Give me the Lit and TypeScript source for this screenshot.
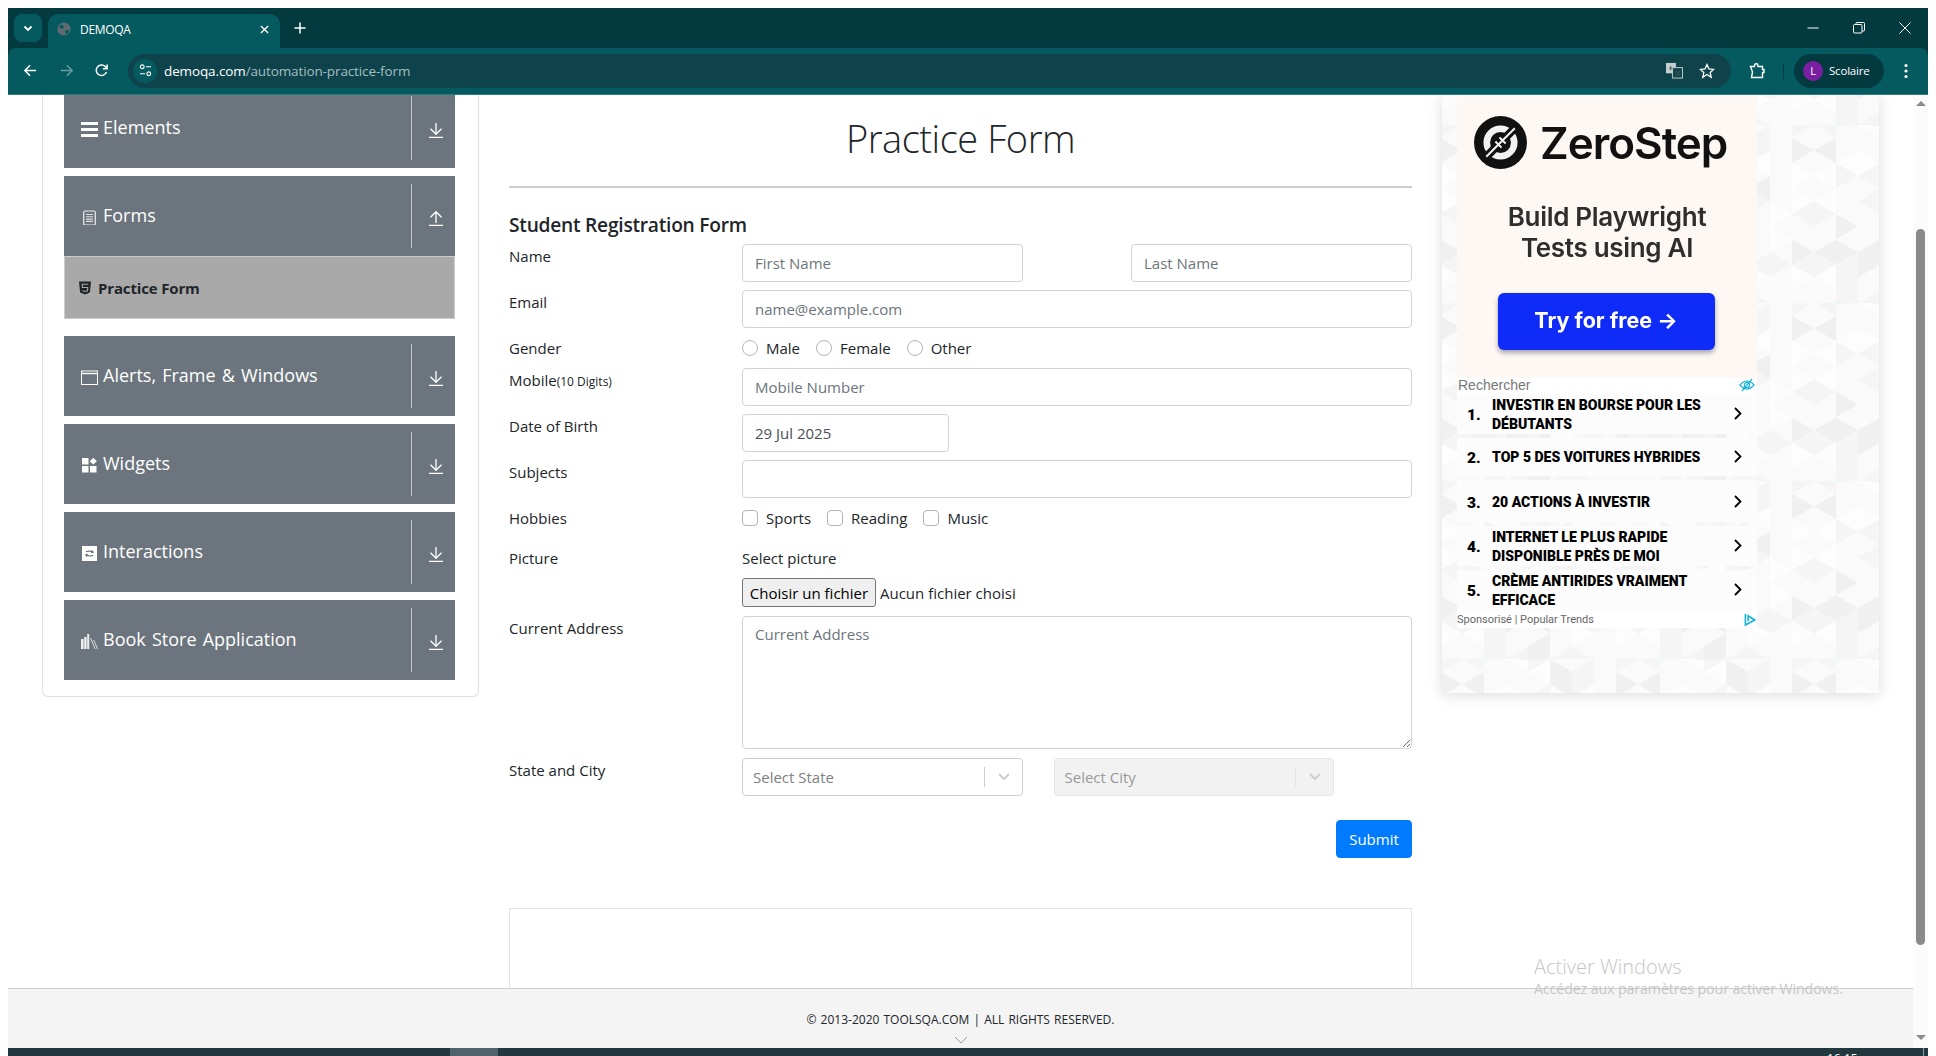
import { LitElement, html, css, svg } from "lit";
import { customElement } from "lit/decorators.js";

const arrowDown = html`<svg class="arrow" viewBox="0 0 16 16" fill="none" stroke="#fff" stroke-width="1.3"><path d="M8 1v11M2.5 6.8 8 12.3l5.5-5.5M1 15.3h14"/></svg>`;
const arrowUp = html`<svg class="arrow" viewBox="0 0 16 16" fill="none" stroke="#fff" stroke-width="1.3"><path d="M8 13V2M2.5 7.2 8 1.7l5.5 5.5M1 15.3h14"/></svg>`;

const icons = {
  elements: html`<svg class="gi" viewBox="0 0 17 15" fill="#fff"><path d="M0 0h17v3H0zM0 6h17v3H0zM0 12h17v3H0z"/></svg>`,
  forms: html`<svg class="gi" viewBox="0 0 17 15" fill="none" stroke="#fff"><rect x="2.7" y="1" width="11.6" height="14" rx="1.5" stroke="#eee" stroke-width="1.2"/><path d="M5 4.5h7M5 6.8h7M5 9.1h7M5 11.4h7" stroke="#ddd" stroke-width="1.1"/></svg>`,
  alerts: html`<svg class="gi" viewBox="0 0 17 15" fill="none"><rect x=".5" y="1" width="16" height="13.5" stroke="#fff" stroke-width="1"/><path d="M.5 3.5h16" stroke="#fff" stroke-width="1.4"/></svg>`,
  widgets: html`<svg class="gi" viewBox="0 0 17 15" fill="#fff"><path d="M1 0h6.5v6.5H1zM1 8h6.5v6.5H1zM9 8h6.5v6.5H9zM12.3-.2l3.6 3.4-3.6 3.4-3.6-3.4z"/></svg>`,
  interactions: html`<svg class="gi" viewBox="0 0 17 15"><rect x="1" y="0" width="15" height="15" fill="#fff"/><path d="M5 6.2c.3-1.5 5-1.5 7 0M12 8.8c-.3 1.5-5 1.5-7 0M11 4.4l1.2 1.9-2 .5M6 10.6 4.8 8.7l2-.5" fill="none" stroke="#6c757d" stroke-width="1.1"/></svg>`,
  books: html`<svg class="gi" viewBox="0 0 17 15" fill="#eee"><path d="M0 5h2.6v10H0zM3.2 3h2.4v12H3.200zM6.200 0h2v15h-2z"/><path d="M9.600 4l4.600 11M12.600 6l4 9" stroke="#ddd" stroke-width="1" fill="none"/></svg>`,
};

// background of the ad column: a lattice of small triangles, tile is 176x178
const triangles = (() => {
  const out = [];
  const w = 22;
  const h = 178 / 7;
  let n = 13;
  const fill = () => {
    n = (n * 67 + 29) % 251;
    const v = n % 16;
    if (v === 0 || v === 5) return "#f0f0f0";
    if (v === 3 || v === 9 || v === 12) return "#f5f5f5";
    if (v === 7 || v === 14) return "#fdfdfd";
    return "#fafafa";
  };
  for (let c = 0; c < 8; c++) {
    const x = c * w;
    const off = c % 2 ? h / 2 : 0;
    for (let r = -1; r < 8; r++) {
      const y = r * h + off;
      out.push(svg`<polygon points="${x},${y} ${x + w},${y + h / 2} ${x},${y + h}" fill=${fill()}/>`);
      out.push(svg`<polygon points="${x + w},${y + h / 2} ${x + w},${y + h * 1.5} ${x},${y + h}" fill=${fill()}/>`);
    }
  }
  return out;
})();

const adRows = [
  { n: "1.", t: ["INVESTIR EN BOURSE POUR LES", "DÉBUTANTS"], cls: "" },
  { n: "2.", t: ["TOP 5 DES VOITURES HYBRIDES"], cls: "short" },
  { n: "3.", t: ["20 ACTIONS À INVESTIR"], cls: "tall" },
  { n: "4.", t: ["INTERNET LE PLUS RAPIDE", "DISPONIBLE PRÈS DE MOI"], cls: "" },
  { n: "5.", t: ["CRÈME ANTIRIDES VRAIMENT", "EFFICACE"], cls: "" },
];

@customElement("app-root")
export class AppRoot extends LitElement {
  private group(icon: unknown, label: string, open = false) {
    return html`
      <div class="group-header">
        <span class="group-icon">${icon}</span>
        <span class="group-title">${label}</span>
        <span class="group-toggle">${open ? arrowUp : arrowDown}</span>
      </div>
    `;
  }

  private chrome() {
    return html`
      <header class="chrome">
        <div class="tabstrip">
          <div class="tab-search"><svg viewBox="0 0 12 12" width="12" height="12" fill="none" stroke="#fff" stroke-width="1.8"><path d="M2.500 4.500 6 8l3.500-3.500"/></svg></div>
          <div class="tab">
            <svg class="favicon" viewBox="0 0 16 16"><circle cx="8" cy="8" r="7.500" fill="#5f6b70"/><path d="M4 3l3 1 1 2-2 2-2-1-2-1zM9 10l3-1 2 1-2 4-2 0z" fill="#055a60"/></svg>
            <span class="tab-title">DEMOQA</span>
            <svg class="tab-close" viewBox="0 0 10 10" fill="none" stroke="#fff" stroke-width="1.500"><path d="M1 1l8 8M9 1l-8 8"/></svg>
          </div>
          <svg class="new-tab" viewBox="0 0 12 12" fill="none" stroke="#fff" stroke-width="1.500"><path d="M6 .5v11M.5 6h11"/></svg>
          <div class="window-controls">
            <svg viewBox="0 0 12 12" fill="none" stroke="#fff"><path d="M.5 6h11"/></svg>
            <svg viewBox="0 0 12 12" fill="none" stroke="#fff"><rect x=".5" y="2.500" width="8.500" height="8.500" rx="1"/><path d="M3 2.500V1.500q0-1 1-1h6.500q1 0 1 1V8q0 1-1 1H9"/></svg>
            <svg viewBox="0 0 12 12" fill="none" stroke="#fff"><path d="M.5.500l11 11M11.500.500l-11 11"/></svg>
          </div>
        </div>
        <div class="toolbar">
          <svg class="nav" viewBox="0 0 16 16" fill="none" stroke="#fff" stroke-width="1.600"><path d="M14 8H2.500M7.500 2.500 2 8l5.500 5.500"/></svg>
          <svg class="nav dim" viewBox="0 0 16 16" fill="none" stroke="#fff" stroke-width="1.600"><path d="M2 8h11.500M8.500 2.500 14 8l-5.500 5.500"/></svg>
          <svg class="nav" viewBox="0 0 16 16" fill="none" stroke="#fff" stroke-width="1.600"><path d="M13.300 9.500A5.600 5.600 0 1 1 12 3.800L14 6M14 1.500V6H9.500"/></svg>
          <div class="omnibox">
            <span class="site-info"><svg viewBox="0 0 14 14" width="13" height="13" fill="none" stroke="#fff" stroke-width="1.200"><circle cx="3.500" cy="3" r="2"/><path d="M7.500 3H13M1 10.500h5.500"/><circle cx="10.500" cy="10.500" r="2"/></svg></span>
            <span class="url"><b>demoqa.com</b>/automation-practice-form</span>
            <svg class="omni-icon translate" viewBox="0 0 18 18"><rect x="0" y="1" width="10.500" height="11" fill="#c4cfd1"/><rect x="7" y="6" width="10.500" height="11" fill="#0e434b" stroke="#c4cfd1"/><path d="M3 6.500h4M5 4v5M10 9l5 6M15 9l-5 6" stroke="#555" fill="none"/></svg>
            <svg class="omni-icon star" viewBox="0 0 16 16" fill="none" stroke="#fff" stroke-width="1.300"><path d="M8 1.500l2 4.400 4.700.5-3.500 3.200 1 4.700L8 11.500l-4.200 2.800 1-4.700L1.300 6.400 6 5.900z"/></svg>
          </div>
          <svg class="ext" viewBox="0 0 16 16" fill="none" stroke="#fff" stroke-width="1.400"><path d="M1.500 3.500H5.500V2.500a1.500 1.500 0 0 1 3.500 0v1h4.500V6.500H15v3h-1.500v5H2.500L3.500 9 1.500 3.500z"/></svg>
          <span class="sep"></span>
          <div class="profile"><span class="avatar">L</span><span class="profile-name">Scolaire</span></div>
          <svg class="menu" viewBox="0 0 4 16" fill="#fff"><circle cx="2" cy="2.500" r="1.600"/><circle cx="2" cy="8" r="1.600"/><circle cx="2" cy="13.500" r="1.600"/></svg>
        </div>
      </header>
    `;
  }

  private sidebar() {
    return html`
      <aside class="sidebar">
        ${this.group(icons.elements, "Elements")}
        <div class="forms-group">
          ${this.group(icons.forms, "Forms", true)}
          <div class="menu-item">
            <svg class="html5" viewBox="0 0 13 14"><path d="M0 0h13l-1.200 12L6.500 14 1.200 12z" fill="#212529"/><path d="M3 3h7M9.800 3H3.500l.3 3.500H9.500L9.200 10l-2.700.8L3.800 10" fill="none" stroke="#a9a9a9" stroke-width="1.200"/></svg>
            <span>Practice Form</span>
          </div>
        </div>
        ${this.group(icons.alerts, "Alerts, Frame & Windows")}
        ${this.group(icons.widgets, "Widgets")}
        ${this.group(icons.interactions, "Interactions")}
        ${this.group(icons.books, "Book Store Application")}
      </aside>
    `;
  }

  private form() {
    return html`
      <main class="content">
        <h1>Practice Form</h1>
        <hr />
        <h5>Student Registration Form</h5>
        <form class="rows">
          <div class="row">
            <label class="lab">Name</label>
            <div class="split">
              <input class="ctl first" placeholder="First Name" />
              <input class="ctl last" placeholder="Last Name" />
            </div>
          </div>
          <div class="row">
            <label class="lab">Email</label>
            <input class="ctl" placeholder="name@example.com" />
          </div>
          <div class="row compact">
            <label class="lab">Gender</label>
            <div class="choices">
              <span class="choice"><i class="radio"></i>Male</span>
              <span class="choice"><i class="radio"></i>Female</span>
              <span class="choice"><i class="radio"></i>Other</span>
            </div>
          </div>
          <div class="row">
            <label class="lab">Mobile<small>(10 Digits)</small></label>
            <input class="ctl" placeholder="Mobile Number" />
          </div>
          <div class="row">
            <label class="lab">Date of Birth</label>
            <input class="ctl date" value="29 Jul 2025" />
          </div>
          <div class="row">
            <label class="lab">Subjects</label>
            <input class="ctl" />
          </div>
          <div class="row compact hobbies">
            <label class="lab">Hobbies</label>
            <div class="choices">
              <span class="choice"><i class="check"></i>Sports</span>
              <span class="choice"><i class="check"></i>Reading</span>
              <span class="choice"><i class="check"></i>Music</span>
            </div>
          </div>
          <div class="row picture">
            <label class="lab">Picture</label>
            <div class="upload">
              <div class="select-picture">Select picture</div>
              <div class="file"><button type="button">Choisir un fichier</button><span>Aucun fichier choisi</span></div>
            </div>
          </div>
          <div class="row">
            <label class="lab">Current Address</label>
            <textarea class="ctl area" placeholder="Current Address"></textarea>
          </div>
          <div class="row state">
            <label class="lab">State and City</label>
            <div class="selects">
              <div class="select"><span class="sel-text">Select State</span><span class="sel-sep"></span><svg class="sel-arrow" viewBox="0 0 12 8" fill="none" stroke="#ccc" stroke-width="1.800"><path d="M1 1l5 5 5-5"/></svg></div>
              <div class="select off"><span class="sel-text">Select City</span><span class="sel-sep"></span><svg class="sel-arrow" viewBox="0 0 12 8" fill="none" stroke="#ccc" stroke-width="1.800"><path d="M1 1l5 5 5-5"/></svg></div>
            </div>
          </div>
          <div class="submit-row"><button type="button" class="submit">Submit</button></div>
        </form>
        <div class="ad-slot"></div>
      </main>
    `;
  }

  private ad() {
    return html`
      <section class="ad-column">
        <svg class="pattern" width="437" height="598">
          <defs>
            <pattern id="tri" width="176" height="178" patternUnits="userSpaceOnUse" x="20" y="30">
              ${triangles}
              <path d="M14 0h14M58 0h14" stroke="#e6f8f8" stroke-width="2"/>
            </pattern>
          </defs>
          <rect width="437" height="598" fill="#fbfbfb"/>
          <rect width="437" height="598" fill="url(#tri)"/>
        </svg>
        <div class="ad">
          <div class="zero">
            <div class="zero-logo">
              <svg viewBox="0 0 52 52" width="53" height="53"><circle cx="26" cy="26" r="26" fill="#111"/><circle cx="26" cy="26" r="13.500" fill="none" stroke="#f2f2f2" stroke-width="6.500"/><path d="M11 41 41 11" stroke="#111" stroke-width="8"/><path d="M12 40 40 12" stroke="#f2f2f2" stroke-width="2"/><path d="M21 25l6 6M25 21l6 6" stroke="#f2f2f2" stroke-width="2"/></svg>
              <span>ZeroStep</span>
            </div>
            <div class="zero-copy">Build Playwright<br />Tests using AI</div>
            <div class="zero-btn"><span>Try for free →</span></div>
          </div>
          <div class="ad-search">
            <span>Rechercher</span>
            <svg viewBox="0 0 16 14" width="16" height="14" fill="none" stroke="#1cb4d6" stroke-width="1.200"><path d="M1 7q7-8 14 0-7 8-14 0z"/><circle cx="8" cy="7" r="2.600"/><path d="M13 1 3 13"/></svg>
          </div>
          <div class="ad-rows">
            ${adRows.map(
              (r) => html`
                <div class="ad-row ${r.cls}">
                  <span class="ad-num">${r.n}</span>
                  <span class="ad-text">${r.t.map((l) => html`<span>${l}</span>`)}</span>
                  <svg class="ad-chev" viewBox="0 0 8 13" fill="none" stroke="#000" stroke-width="1.800"><path d="M1 1l5.500 5.500L1 12"/></svg>
                </div>
              `
            )}
          </div>
          <div class="ad-foot">
            <span>Sponsorisé | Popular Trends</span>
            <svg viewBox="0 0 13 14" width="12" height="13" fill="none" stroke="#1cb4d6" stroke-width="1.800"><path d="M1.500 1v12L11.500 7.500 4.500 3v6"/></svg>
          </div>
        </div>
      </section>
    `;
  }

  render() {
    return html`
      ${this.chrome()}
      <div class="viewport">
        <div class="page">
          <div class="scroll">
            <div class="cols">
              ${this.sidebar()}
              ${this.form()}
              ${this.ad()}
            </div>
          </div>
          <footer class="footer">
            <span>© 2013-2020 TOOLSQA.COM | ALL RIGHTS RESERVED.</span>
            <svg class="foot-chev" viewBox="0 0 14 8" fill="none" stroke="#999"><path d="M1 1l6 6 6-6"/></svg>
          </footer>
          <div class="activate">
            <div class="act-title">Activer Windows</div>
            <div class="act-sub">Accédez aux paramètres pour activer Windows.</div>
          </div>
        </div>
        <div class="scrollbar">
          <span class="sb-up"></span>
          <span class="sb-thumb"></span>
          <span class="sb-down"></span>
        </div>
      </div>
      <div class="taskbar">
        <span class="task-active"></span>
        <span class="task-clock">16:15</span>
        <span class="task-line"></span>
      </div>
    `;
  }

  static styles = css`
    :host {
      display: flex;
      flex-direction: column;
      box-sizing: border-box;
      width: 1936px;
      height: 1056px;
      padding: 8px 8px 0;
      background: #fff;
      overflow: hidden;
      font-family: "Open Sans", sans-serif;
      font-size: 15px;
      color: #212529;
    }
    * { box-sizing: border-box; }

    /* browser */
    .chrome { flex: none; height: 87px; background: #033a40; color: #fff; }
    .tabstrip { height: 40px; display: flex; align-items: flex-end; position: relative; }
    .tab-search {
      width: 28px; height: 28px; margin: 0 6px 6px 6px; border-radius: 8px; background: #055a60;
      display: flex; align-items: center; justify-content: center;
    }
    .tab {
      width: 232px; height: 34px; background: #055a60; border-radius: 10px 10px 0 0;
      display: flex; align-items: center; padding: 0 11px 4px 9px;
    }
    .favicon { width: 14px; height: 14px; }
    .tab-title { margin-left: 9px; flex: 1; font-size: 12px; letter-spacing: -.3px; }
    .tab-close { width: 9px; height: 9px; }
    .new-tab { width: 12px; height: 12px; margin: 0 0 14px 14px; }
    .window-controls { margin-left: auto; display: flex; gap: 34px; padding: 0 17px 14px 0; }
    .window-controls svg { width: 12px; height: 12px; }
    .toolbar {
      height: 47px; background: #055a60; border-bottom: 1px solid #2f7b80; border-radius: 8px 8px 0 0;
      display: flex; align-items: center; padding: 0 0 1px 15px;
    }
    .nav { width: 15px; height: 15px; margin-right: 21px; flex: none; }
    .nav:nth-child(2) { margin-right: 20px; }
    .nav.dim { opacity: .4; }
    .omnibox {
      width: 1603px; height: 34px; margin-left: -2px; border-radius: 17px; background: #0e434b;
      display: flex; align-items: center; padding: 0 10px 0 5px;
    }
    .site-info {
      width: 24px; height: 24px; border-radius: 50%; background: #055a60;
      display: flex; align-items: center; justify-content: center;
    }
    .url { margin-left: 7px; flex: 1; font-size: 13.500px; letter-spacing: -.12px; color: #a3bfc2; white-space: nowrap; }
    .url b { font-weight: 400; color: #fff; }
    .omni-icon { height: 16px; width: 16px; flex: none; }
    .translate { margin-right: 16px; height: 17px; width: 17px; }
    .star { margin-right: 6px; }
    .ext { width: 16px; height: 16px; margin-left: 18px; flex: none; }
    .sep { width: 1px; height: 16px; background: #033a40; margin-left: 18px; flex: none; }
    .profile {
      width: 90px; height: 34px; margin-left: 10px; border-radius: 17px; background: #033a40;
      display: flex; align-items: center; padding-left: 9px; flex: none;
    }
    .avatar {
      width: 20px; height: 20px; border-radius: 50%; background: #7b1fa2; font-size: 11px;
      display: flex; align-items: center; justify-content: center;
    }
    .profile-name { margin-left: 6px; font-size: 11.500px; letter-spacing: -.2px; }
    .menu { width: 4px; height: 16px; margin-left: 20px; flex: none; }

    /* page */
    .viewport { flex: 1; min-height: 0; display: flex; }
    .page { flex: 1; min-width: 0; display: flex; flex-direction: column; position: relative; }
    .scroll { flex: 1; min-height: 0; overflow: hidden; }
    .cols {
      display: grid; grid-template-columns: 437px 903px 437px; column-gap: 30px;
      padding-left: 34px; align-items: start;
    }

    /* sidebar */
    .sidebar {
      margin-top: -7px; padding: 0 23px 16px 21px; border: 1px solid #e0e0e0; border-top: none;
      border-radius: 0 0 6px 6px; display: flex; flex-direction: column; gap: 8px;
    }
    .group-header { height: 80px; background: #6c757d; padding: 8px 0; display: flex; align-items: center; color: #fff; }
    .group-icon { width: 39px; padding-left: 17px; display: flex; margin-top: 3px; flex: none; }
    .gi { width: 17px; height: 15px; display: block; }
    .group-title { flex: 1; font-size: 18px; word-spacing: 1.500px; margin-top: -3px; }
    .group-toggle {
      width: 44px; height: 64px; border-left: 1px solid #c3c7cb; flex: none;
      display: flex; align-items: center; justify-content: center; padding: 3px 0 0 5px;
    }
    .arrow { width: 16px; height: 16px; }
    .forms-group { margin-bottom: 9px; }
    .menu-item {
      height: 63px; background: #a9a9a9; border: 1px solid #ccc; display: flex; align-items: center;
      padding-left: 14px; gap: 7px; font-weight: 700; font-size: 15px; letter-spacing: -.15px;
    }
    .html5 { width: 12px; height: 14px; flex: none; }

    /* form */
    .content { min-width: 0; }
    h1 {
      margin: 19px 0 0; height: 48px; line-height: 48px; text-align: center;
      font-size: 38px; font-weight: 300; letter-spacing: -.45px;
    }
    hr { margin: 24px 0 0; border: none; border-top: 2px solid #ccc; }
    h5 { margin: 25px 0 7px; font-size: 19.200px; line-height: 24px; font-weight: 600; letter-spacing: -.25px; }
    .rows { display: flex; flex-direction: column; gap: 8px; }
    .row { display: flex; align-items: flex-start; }
    .lab { width: 233px; flex: none; line-height: 24px; }
    .lab small { font-size: 12px; }
    .ctl {
      flex: 1; min-width: 0; height: 38px; border: 1px solid #ced4da; border-radius: 4px; padding: 6px 12px;
      font: inherit; color: #495057; background: #fff; outline: none;
    }
    .ctl::placeholder { color: #6c757d; opacity: 1; }
    .split { flex: 1; display: flex; justify-content: space-between; }
    .first { flex: none; width: 280.500px; }
    .last { flex: none; width: 281px; }
    .date { flex: none; width: 207px; }
    .compact { height: 24px; }
    .hobbies { height: 26px; }
    .choices { display: flex; line-height: 24px; }
    .choice { display: flex; align-items: center; margin-right: 16px; white-space: nowrap; }
    .radio, .check { width: 16px; height: 16px; margin-right: 8px; border: 1px solid #adb5bd; background: #fff; flex: none; }
    .radio { border-radius: 50%; }
    .check { border-radius: 4px; }
    .picture { padding-top: 6px; height: 68px; }
    .select-picture { line-height: 24px; margin-bottom: 8px; }
    .file { display: flex; align-items: center; }
    .file button {
      height: 29px; width: 134px; padding: 0; background: #efefef; border: 1px solid #767676; border-radius: 3px;
      font: inherit; color: #000;
    }
    .file span { margin-left: 4px; }
    .area { height: 133px; resize: vertical; padding-top: 7px; }
    .state { margin-top: 1px; }
    .selects { flex: 1; display: flex; gap: 31px; }
    .select {
      width: 280.500px; height: 38px; border: 1px solid #ccc; border-radius: 4px; background: #fff;
      display: flex; align-items: center; padding-left: 10px; color: #808080;
    }
    .sel-text { flex: 1; }
    .sel-sep { width: 1px; height: 20px; background: #ccc; }
    .sel-arrow { width: 12px; height: 8px; margin: 0 12px 0 13px; }
    .off { background: #f2f2f2; border-color: #e6e6e6; color: #999; }
    .off .sel-sep { background: #e6e6e6; }
    .submit-row { display: flex; justify-content: flex-end; margin-top: 16px; }
    .submit {
      width: 76px; height: 38px; border: 1px solid #007bff; border-radius: 4px; background: #007bff; color: #fff;
      font: inherit; padding: 0;
    }
    .ad-slot { height: 120px; margin-top: 50px; border: 1px solid #e3e3e3; }

    /* ad */
    .ad-column { height: 598px; position: relative; box-shadow: 0 2px 14px rgba(0, 0, 0, .14); }
    .pattern { position: absolute; inset: 0; }
    .ad { position: relative; width: 300px; margin-left: 15px; }
    .zero {
      height: 283px; background: #fdf8f3; padding-top: 21px; display: flex; flex-direction: column; align-items: center;
      font-family: Inter, sans-serif; filter: blur(.35px);
    }
    .zero-logo { display: flex; align-items: center; gap: 13px; align-self: flex-start; margin-left: 17px; }
    .zero-logo span { font-size: 44px; font-weight: 600; color: #111; letter-spacing: -1px; line-height: 52px; }
    .zero-copy { margin-top: 32px; font-size: 26px; line-height: 31px; font-weight: 600; letter-spacing: -.3px; color: #2e2e2e; text-align: center; }
    .zero-btn {
      margin: 30px 2px 0 0; width: 217px; height: 57px; border-radius: 6px; background: #0f2bf7; color: #fff; font-weight: 700;
      font-size: 21.500px; display: flex; align-items: center; justify-content: center; padding-bottom: 3px;
      box-shadow: 0 3px 5px rgba(0, 0, 60, .35);
    }
    .ad-search {
      height: 16px; background: #fff; display: flex; align-items: center; justify-content: space-between;
      font-family: "Liberation Sans", sans-serif; font-size: 14px; color: #777; padding: 0 2px 3px 1px;
    }
    .ad-rows { display: flex; flex-direction: column; gap: 4px; }
    .ad-row {
      height: 40px; background: #fcfcfc; display: flex; align-items: center; padding: 1px 0 0 10px;
      font-family: Roboto, sans-serif; color: #000; font-weight: 900;
    }
    .ad-row.short { height: 38px; }
    .ad-row.tall { height: 42px; padding-top: 3px; }
    .ad-num { width: 25px; font-size: 15.500px; flex: none; }
    .ad-text {
      flex: 1; display: flex; flex-direction: column; font-size: 14px; line-height: 19px;
      white-space: nowrap;
    }
    .ad-chev { width: 8px; height: 13px; margin: -2px 15px 0 0; flex: none; }
    .ad-foot {
      height: 18px; background: #fff; display: flex; align-items: center; justify-content: space-between;
      font-family: Roboto, sans-serif; font-size: 11px; color: #666; padding-right: 1px;
    }

    /* footer and desktop */
    .footer {
      flex: none; height: 60px; background: #f4f4f4; border-top: 1px solid #ccc; display: flex; flex-direction: column;
      align-items: center; padding-top: 22px; font-size: 12px; word-spacing: 1px; color: #212529;
    }
    .foot-chev { width: 14px; height: 8px; margin-top: 8px; }
    .activate { position: absolute; left: 1526px; top: 859px; color: #c6c6c6; white-space: nowrap; pointer-events: none; }
    .act-title { font-size: 20px; line-height: 25px; font-weight: 300; }
    .act-sub { font-size: 14.200px; line-height: 19px; letter-spacing: -.1px; }
    .scrollbar { flex: none; width: 15px; background: #fbfbfb; display: flex; flex-direction: column; align-items: center; position: relative; }
    .sb-up, .sb-down { width: 0; height: 0; border-left: 5px solid transparent; border-right: 5px solid transparent; }
    .sb-up { margin-top: 6px; border-bottom: 5px solid #8a8a8a; }
    .sb-down { margin-top: 90px; border-top: 5px solid #8a8a8a; }
    .sb-thumb { width: 9px; height: 716px; margin-top: 123px; margin-left: 0; background: #8a8a8a; border-radius: 5px; }
    .taskbar { flex: none; height: 8px; background: #22383f; position: relative; overflow: hidden; display: flex; }
    .task-active { width: 48px; margin-left: 442px; background: #50626a; }
    .task-clock { position: absolute; left: 1819px; top: 4px; font-size: 12px; line-height: 14px; color: #fff; }
    .task-line { position: absolute; left: 1915px; top: 0; bottom: 0; width: 1px; background: #8a9ba0; }
  `;
}
